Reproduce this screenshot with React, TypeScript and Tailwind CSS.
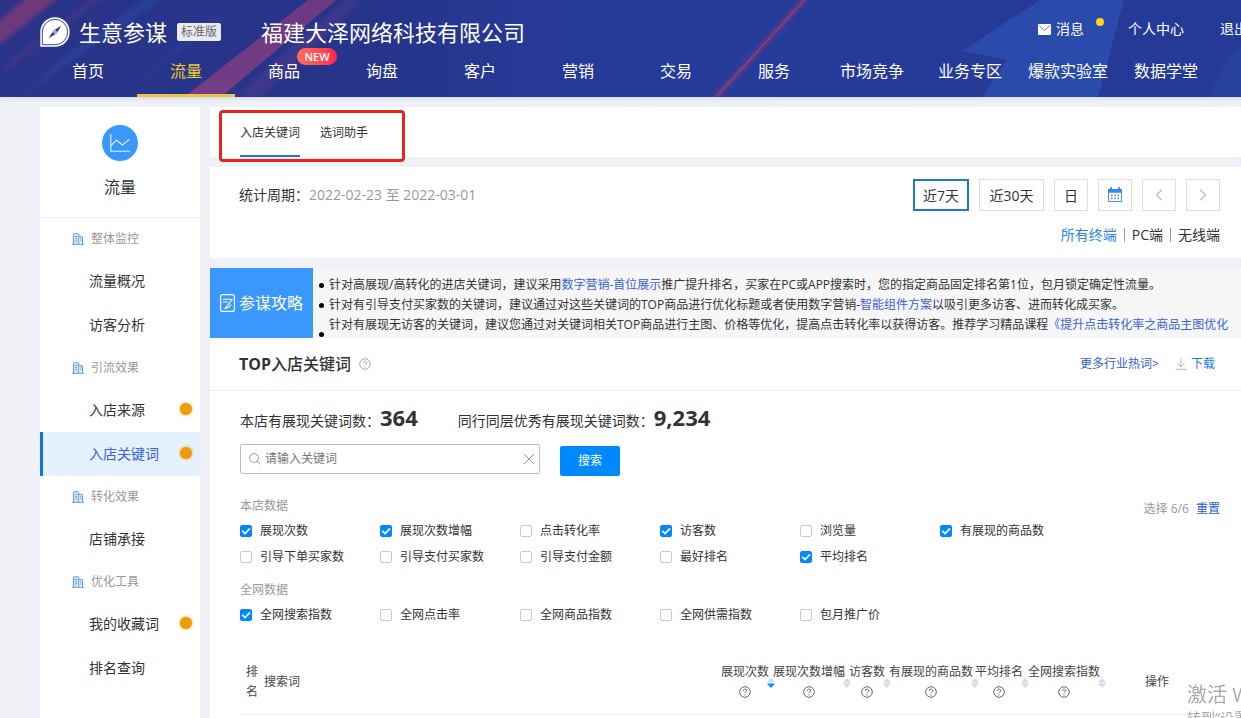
import React, { useState } from 'react';

interface NavItem {
  label: string;
  active?: boolean;
  isNew?: boolean;
}

interface MenuItem {
  label: string;
  active?: boolean;
  dot?: boolean;
}

interface Metric {
  label: string;
  checked?: boolean;
}

const NAV: NavItem[] = [
  { label: '首页' },
  { label: '流量', active: true },
  { label: '商品', isNew: true },
  { label: '询盘' },
  { label: '客户' },
  { label: '营销' },
  { label: '交易' },
  { label: '服务' },
  { label: '市场竞争' },
  { label: '业务专区' },
  { label: '爆款实验室' },
  { label: '数据学堂' },
];

const MENU: { title: string; items: MenuItem[] }[] = [
  { title: '整体监控', items: [{ label: '流量概况' }, { label: '访客分析' }] },
  {
    title: '引流效果',
    items: [
      { label: '入店来源', dot: true },
      { label: '入店关键词', active: true, dot: true },
    ],
  },
  { title: '转化效果', items: [{ label: '店铺承接' }] },
  { title: '优化工具', items: [{ label: '我的收藏词', dot: true }, { label: '排名查询' }] },
];

const SHOP_METRICS: Metric[] = [
  { label: '展现次数', checked: true },
  { label: '展现次数增幅', checked: true },
  { label: '点击转化率' },
  { label: '访客数', checked: true },
  { label: '浏览量' },
  { label: '有展现的商品数', checked: true },
  { label: '引导下单买家数' },
  { label: '引导支付买家数' },
  { label: '引导支付金额' },
  { label: '最好排名' },
  { label: '平均排名', checked: true },
];

const SITE_METRICS: Metric[] = [
  { label: '全网搜索指数', checked: true },
  { label: '全网点击率' },
  { label: '全网商品指数' },
  { label: '全网供需指数' },
  { label: '包月推广价' },
];

const COLUMNS = [
  { label: '展现次数', width: 'w-[52px]', sorted: true },
  { label: '展现次数增幅', width: 'w-[76px]' },
  { label: '访客数', width: 'w-[40px]' },
  { label: '有展现的商品数', width: 'w-[86px]' },
  { label: '平均排名', width: 'w-[53px]' },
  { label: '全网搜索指数', width: 'w-[76px]' },
];

const LogoIcon = () => (
  <svg width="30" height="30" viewBox="0 0 30 30" aria-hidden="true">
    <path d="M0.3 29.7V15A14.7 14.7 0 1 1 15 29.7Z" fill="#fff" />
    <path d="M2.3 27.7V15A12.7 12.7 0 1 1 15 27.7Z" fill="none" stroke="#27368a" strokeWidth="0.9" />
    <path d="M21.5 8.8 16.4 16.4 8.5 21.2 13.6 13.6Z" fill="#27368a" />
    <circle cx="15" cy="15" r="1.7" fill="#fff" />
    <circle cx="15" cy="15" r="0.8" fill="#27368a" />
  </svg>
);

const BuildingIcon = () => (
  <svg width="12" height="12" viewBox="0 0 12 12" fill="none" stroke="#5b98f5" aria-hidden="true">
    <path d="M1.5 11V1.5Q1.5 0.8 2.2 0.8H6Q6.8 0.8 6.8 1.5V11" fill="#dceaff" />
    <path d="M6.8 3.5H9.8Q10.5 3.5 10.5 4.2V11" fill="#dceaff" />
    <path d="M0 11.3H12M3 3.5H5.3M3 5.7H5.3M3 7.9H5.3M8 5.8H9.4M8 8H9.4" />
  </svg>
);

const HelpIcon = ({ color, size }: { color: string; size: number }) => (
  <svg width={size} height={size} viewBox="0 0 12 12" fill="none" stroke={color} aria-hidden="true">
    <circle cx="6" cy="6" r="5.3" strokeWidth="1" />
    <path d="M4.4 4.9A1.6 1.6 0 1 1 6.8 6.1Q6 6.5 6 7.3" strokeWidth="1" />
    <circle cx="6" cy="8.9" r="0.6" fill={color} stroke="none" />
  </svg>
);

const CalendarIcon = () => (
  <svg width="16" height="16" viewBox="0 0 16 16" aria-hidden="true">
    <path d="M1 2H3V0.6H5V2H11V0.6H13V2H15V5.6H1Z" fill="#3089f5" />
    <rect x="1.5" y="5" width="13" height="9.5" fill="#fff" stroke="#3f93f6" />
    <path d="M1 2H3V0.6H5V2H11V0.6H13V2H15V5.6H1Z" fill="#3089f5" />
    <path d="M4 8.4H12.4M4 11.4H12.4" stroke="#6a8be0" strokeWidth="1.6" strokeDasharray="1.6 1.6" />
  </svg>
);

const SortIcon = ({ sorted }: { sorted?: boolean }) => (
  <svg width="8" height="10" viewBox="0 0 8 10" aria-hidden="true">
    <path d="M4 0 8 4.5H0Z" fill="#d3dbe6" />
    <path d="M4 10 8 5.5H0Z" fill={sorted ? '#0089ff' : '#d3dbe6'} />
  </svg>
);

const HeaderArt = () => (
  <svg
    className="absolute inset-0 h-full w-full"
    viewBox="0 0 1241 97"
    preserveAspectRatio="xMidYMid slice"
    aria-hidden="true"
  >
    <defs>
      <linearGradient id="headBg" x1="0" x2="1" y1="0" y2="0">
        <stop offset="0" stopColor="#2a3489" />
        <stop offset="0.3" stopColor="#26348a" />
        <stop offset="0.5" stopColor="#263c9b" />
        <stop offset="1" stopColor="#253a96" />
      </linearGradient>
      <linearGradient id="headBand" x1="0" x2="0" y1="0" y2="1">
        <stop offset="0" stopColor="#713a80" />
        <stop offset="1" stopColor="#7d3e85" />
      </linearGradient>
      <filter id="headSoft" x="-20%" y="-20%" width="140%" height="140%">
        <feGaussianBlur stdDeviation="2" />
      </filter>
    </defs>
    <rect width="1241" height="97" fill="url(#headBg)" />
    <g filter="url(#headSoft)">
      <path d="M-10 28 30 -5H62L-10 52Z" fill="#8a3c73" opacity="0.7" />
      <path d="M10 60 95 -5H108L0 75Z" fill="#6b3a80" opacity="0.3" />
      <path d="M60 60 150 -5H168L20 97Z" fill="#2b49a4" opacity="0.5" />
      <path d="M235 97 345 0H362L262 97Z" fill="#5a3d90" opacity="0.4" />
      <path d="M160 60 215 15 225 20 120 97Z" fill="#30419b" opacity="0.4" />
    </g>
    <path d="M184 97 308 0H336L221 97Z" fill="url(#headBand)" opacity="0.9" />
    <path d="M716 97 806 -2" stroke="#b03a68" strokeWidth="6" opacity="0.35" filter="url(#headSoft)" />
    <path d="M716 97 806 -2" stroke="#933a78" strokeWidth="2" opacity="0.9" />
    <path d="M1040 0H1124L1098 97H982L1007 60 963 51Z" fill="#2b4fae" opacity="0.85" />
    <path d="M1225 60 1241 45V97H1208Z" fill="#2b4aa6" opacity="0.4" />
  </svg>
);

const Header = () => (
  <header className="relative overflow-hidden bg-[#26388f] text-white">
    <HeaderArt />
    <div className="relative min-w-[1248px]">
      <div className="flex h-12 items-start pl-10">
        <div className="mt-4 flex h-8 items-center">
          <LogoIcon />
          <span className="ml-[9px] text-[22px] leading-8">生意参谋</span>
          <span className="ml-2.5 rounded-xs bg-[#e8ebf2] px-1 text-[12px] leading-[18px] text-[#666]">标准版</span>
          <span className="ml-10 text-[22px] leading-8">福建大泽网络科技有限公司</span>
        </div>
        <nav className="ml-auto mt-[18px] flex items-start text-[14px] leading-[22px]">
          <a href="#" className="flex items-center">
            <svg width="13" height="11" viewBox="0 0 13 11" aria-hidden="true">
              <rect width="13" height="11" rx="1" fill="#fff" />
              <path d="M1 1.5 6.5 6.5 12 1.5" fill="none" stroke="#3d50a0" strokeWidth="0.8" />
            </svg>
            <span className="ml-[5px]">消息</span>
          </a>
          <span className="ml-3 h-2 w-2 rounded-full bg-[#ffd21f]" />
          <a href="#" className="ml-6">个人中心</a>
          <a href="#" className="ml-9">退出</a>
        </nav>
      </div>
      <nav className="flex pl-[39px] text-[16px] leading-6">
        {NAV.map((item) => (
          <a
            key={item.label}
            href="#"
            className={`relative flex h-[49px] w-[98px] shrink-0 justify-center border-b-[3px] pt-[11px] ${
              item.active ? 'border-[#e9c545] text-[#f0cb33]' : 'border-transparent'
            }`}
          >
            {item.label}
            {item.isNew && (
              <span className="absolute left-[62px] top-0 h-[17px] w-10 rounded-full bg-linear-to-r from-[#ff6d5a] to-[#ff2450] text-center text-[11px] font-semibold leading-[17px]">
                NEW
              </span>
            )}
          </a>
        ))}
      </nav>
    </div>
  </header>
);

const Sidebar = () => (
  <aside className="w-40 shrink-0 bg-white">
    <div className="flex h-[111px] flex-col items-center border-b border-[#ebedf1] pt-[18px]">
      <div className="flex h-9 w-9 items-center justify-center rounded-full bg-[#3a98fb]">
        <svg width="20" height="20" viewBox="0 0 20 20" fill="none" stroke="#e6f2ff" strokeWidth="1.1" aria-hidden="true">
          <path d="M0.8 1V18.2H20" />
          <path d="M1 12.5 6.5 7.2 12.5 12 19.5 6.2" />
        </svg>
      </div>
      <h1 className="mt-3.5 text-[16px] leading-6">流量</h1>
    </div>
    <nav>
      {MENU.map((group) => (
        <section key={group.title}>
          <h2 className="flex h-[41px] items-center gap-[7px] pl-8 text-[12px] text-[#999]">
            <BuildingIcon />
            {group.title}
          </h2>
          {group.items.map((item) => (
            <a
              key={item.label}
              href="#"
              className={`flex h-11 items-center justify-between border-l-[3px] pb-0.5 pl-[46px] pr-2 text-[14px] ${
                item.active ? 'border-[#1076dd] bg-[#e5f1fe] text-[#3663dd]' : 'border-transparent'
              }`}
            >
              {item.label}
              {item.dot && <span className="h-3 w-3 rounded-full bg-[#f09c08] shadow-[0_0_3px_#f5a106]" />}
            </a>
          ))}
        </section>
      ))}
    </nav>
  </aside>
);

const MetricGroup = ({ metrics }: { metrics: Metric[] }) => (
  <div className="grid grid-cols-[repeat(6,140px)]">
    {metrics.map((m) => (
      <label key={m.label} className="flex h-[26px] items-center gap-2 text-[12px]">
        <span className="grid h-3 w-3">
          <input
            type="checkbox"
            defaultChecked={m.checked}
            className="peer col-start-1 row-start-1 h-3 w-3 appearance-none rounded-xs border border-[#bfcbd9] bg-white checked:border-[#0089ff] checked:bg-[#0089ff]"
          />
          <svg
            viewBox="0 0 12 12"
            className="pointer-events-none col-start-1 row-start-1 hidden h-3 w-3 peer-checked:block"
            fill="none"
            stroke="#fff"
            strokeWidth="1.6"
            aria-hidden="true"
          >
            <path d="M2.2 5.8 5 8.6 10 3.4" />
          </svg>
        </span>
        {m.label}
      </label>
    ))}
  </div>
);

const PeriodPanel = () => {
  const box = 'flex h-8 items-center justify-center bg-white';
  return (
    <section className="flex h-[91px] justify-between bg-white pl-[29px] pr-[21px] pt-3 text-[14px]">
      <p className="pt-1 leading-6">
        统计周期：<span className="text-[#999]">2022-02-23 至 2022-03-01</span>
      </p>
      <div>
        <div className="flex justify-end gap-2.5">
          <button className={`${box} w-14 border-2 border-[#1e78d0]`}>近7天</button>
          <button className={`${box} w-[65px] border border-[#dedede]`}>近30天</button>
          <button className={`${box} w-[34px] border border-[#dedede]`}>日</button>
          <button aria-label="选择日期" className={`${box} w-[34px] border border-[#dedede]`}>
            <CalendarIcon />
          </button>
          <button aria-label="上一周期" className={`${box} w-[34px] border border-[#dedede]`}>
            <svg width="8" height="12" viewBox="0 0 8 12" fill="none" stroke="#bbb" strokeWidth="1.2">
              <path d="M7 0.8 1.5 6 7 11.2" />
            </svg>
          </button>
          <button aria-label="下一周期" className={`${box} w-[34px] border border-[#dedede]`}>
            <svg width="8" height="12" viewBox="0 0 8 12" fill="none" stroke="#bbb" strokeWidth="1.2">
              <path d="M1 0.8 6.5 6 1 11.2" />
            </svg>
          </button>
        </div>
        <div className="mt-3 flex items-center justify-end gap-[7px] leading-6">
          <a href="#" className="text-[#2a84ec]">所有终端</a>
          <span className="h-3.5 w-px bg-[#999]" />
          <a href="#">PC端</a>
          <span className="h-3.5 w-px bg-[#999]" />
          <a href="#">无线端</a>
        </div>
      </div>
    </section>
  );
};

const Tips = () => {
  const link = 'text-[#3663dd]';
  const dot = 'h-[5px] w-[5px] shrink-0 rounded-full bg-black';
  return (
    <section className="flex h-[70px] bg-[#f6f6f7]">
      <div className="flex w-[103px] shrink-0 items-center justify-center gap-1 bg-[#3a98fd] text-[16px] text-white">
        <svg width="15" height="18" viewBox="0 0 15 18" fill="none" stroke="#fff" strokeWidth="1.1" aria-hidden="true">
          <rect x="0.6" y="0.6" width="13.8" height="16.8" rx="2" />
          <path d="M2.8 5.2H11M2.8 8H8M12.5 4.8 7 12.2M11 10.5Q9.5 14 5 14.2L7.5 11.5" />
        </svg>
        参谋攻略
      </div>
      <ul className="min-w-0 flex-1 overflow-hidden whitespace-nowrap pl-1.5 pt-[7px] text-[12px] leading-5">
        <li className="flex h-5 items-center gap-[5px]">
          <span className={dot} />
          <p>
            针对高展现/高转化的进店关键词，建议采用<a href="#" className={link}>数字营销-首位展示</a>
            推广提升排名，买家在PC或APP搜索时，您的指定商品固定排名第1位，包月锁定确定性流量。
          </p>
        </li>
        <li className="flex h-5 items-center gap-[5px]">
          <span className={dot} />
          <p>
            针对有引导支付买家数的关键词，建议通过对这些关键词的TOP商品进行优化标题或者使用数字营销-
            <a href="#" className={link}>智能组件方案</a>以吸引更多访客、进而转化成买家。
          </p>
        </li>
        <li className="flex items-end gap-[5px]">
          <span className={dot} />
          <p className="pb-0.5">
            针对有展现无访客的关键词，建议您通过对关键词相关TOP商品进行主图、价格等优化，提高点击转化率以获得访客。推荐学习精品课程
            <a href="#" className={link}>《提升点击转化率之商品主图优化</a>
          </p>
        </li>
      </ul>
    </section>
  );
};

const KeywordTable = () => (
  <table className="mt-[23px] w-full table-fixed border-b border-[#ebedf1] text-[12px] leading-5 text-[#444]">
    <thead>
      <tr className="h-[63px]">
        <th className="w-6 px-1 font-normal">排名</th>
        <th className="text-left font-normal">搜索词</th>
        {COLUMNS.map((col) => (
          <th key={col.label} className={`${col.width} whitespace-nowrap p-0 text-left font-normal`}>
            <span className="relative inline-flex flex-col items-center">
              {col.label}
              <span className="flex h-5 items-center">
                <HelpIcon color="#666" size={12} />
              </span>
              <span className="absolute -right-1.5 top-4">
                <SortIcon sorted={col.sorted} />
              </span>
            </span>
          </th>
        ))}
        <th className="w-[116px] p-0 pr-2.5 font-normal">操作</th>
      </tr>
    </thead>
  </table>
);

const KeywordPanel = () => {
  const [keyword, setKeyword] = useState('');
  return (
    <section className="flex-1 bg-white">
      <div className="flex h-[53px] items-center border-b border-[#ebedf1] pl-[29px] pr-[26px] text-[12px]">
        <h2 className="text-[16px] font-medium">
          <span className="font-bold">TOP</span>入店关键词
        </h2>
        <button aria-label="帮助" className="ml-2">
          <HelpIcon color="#99a8be" size={12} />
        </button>
        <a href="#" className="ml-auto text-[#2f5fd0]">更多行业热词&gt;</a>
        <a href="#" className="ml-4 flex items-center gap-1 text-[#1c7fe6]">
          <svg width="12" height="12" viewBox="0 0 12 12" fill="none" stroke="#a9b8cc" aria-hidden="true">
            <path d="M6 0.5V8.5M2.5 5.3 6 8.8 9.5 5.3M0.5 11.3H11.5" />
          </svg>
          下载
        </a>
      </div>

      <div className="pl-[30px] pr-[21px] pt-2.5">
        <div className="flex h-8 items-baseline gap-10 text-[14px] leading-8">
          <p>
            本店有展现关键词数：<strong className="text-[22px] font-bold">364</strong>
          </p>
          <p>
            同行同层优秀有展现关键词数：<strong className="text-[22px] font-bold">9,234</strong>
          </p>
        </div>

        <form className="mt-[11px] flex items-end gap-5" onSubmit={(e) => e.preventDefault()}>
          <div className="mb-0.5 flex h-[30px] w-[300px] items-center rounded-xs border border-[#b5c0cf] pl-2 pr-1">
            <svg width="12" height="12" viewBox="0 0 12 12" fill="none" stroke="#999" aria-hidden="true">
              <circle cx="5" cy="5" r="4.4" />
              <path d="M8.2 8.2 11.5 11.5" />
            </svg>
            <input
              type="text"
              aria-label="关键词"
              placeholder="请输入关键词"
              value={keyword}
              onChange={(e) => setKeyword(e.target.value)}
              className="ml-1 min-w-0 flex-1 text-[12px] outline-none placeholder:text-[#757575]"
            />
            <button type="button" aria-label="清空" onClick={() => setKeyword('')}>
              <svg width="12" height="12" viewBox="0 0 12 12" stroke="#999">
                <path d="M1 1 11 11M11 1 1 11" />
              </svg>
            </button>
          </div>
          <button type="submit" className="h-[30px] w-[60px] rounded-xs bg-[#0089ff] text-[12px] text-white">
            搜索
          </button>
        </form>

        <div className="mt-5 flex h-[22px] items-start justify-between text-[12px] leading-5 text-[#999]">
          <h3>本店数据</h3>
          <p className="pt-[3px]">
            选择 6/6{' '}
            <button type="button" className="ml-1 text-[#1f5fd6]">重置</button>
          </p>
        </div>
        <MetricGroup metrics={SHOP_METRICS} />
        <h3 className="mt-2.5 h-[22px] text-[12px] leading-5 text-[#999]">全网数据</h3>
        <MetricGroup metrics={SITE_METRICS} />
        <KeywordTable />
      </div>
    </section>
  );
};

export default function App() {
  return (
    <div className="flex min-h-screen flex-col overflow-x-hidden bg-[#eff1f7] font-['Open_Sans','Noto_Sans_CJK_SC',sans-serif] text-[#333]">
      <Header />
      <div className="flex flex-1 gap-2.5 pl-10 pt-2.5 shadow-[inset_0_4px_4px_-2px_#d9dbe6]">
        <Sidebar />
        <main className="flex min-w-0 flex-1 flex-col">
          <nav className="relative mb-2.5 flex h-[50px] gap-5 bg-white pl-[30px] text-[12px]">
            <a href="#" className="flex items-center border-b-2 border-[#2277cc] pt-1">入店关键词</a>
            <a href="#" className="flex items-center border-b-2 border-transparent pt-1">选词助手</a>
            <div className="pointer-events-none absolute left-[9px] top-[3px] h-[52px] w-[186px] rounded-[4px] border-[3px] border-[#e5261f]" />
          </nav>
          <PeriodPanel />
          <div className="mt-2.5">
            <Tips />
          </div>
          <KeywordPanel />
        </main>
      </div>

      <div className="pointer-events-none fixed bottom-0 right-0 h-9 w-[54px] overflow-hidden whitespace-nowrap text-[#a9a9a9]">
        <p className="text-[20px] leading-[26px]">激活 Windows</p>
        <p className="text-[14px] leading-5">转到“设置”以激活 Windows。</p>
      </div>
    </div>
  );
}
